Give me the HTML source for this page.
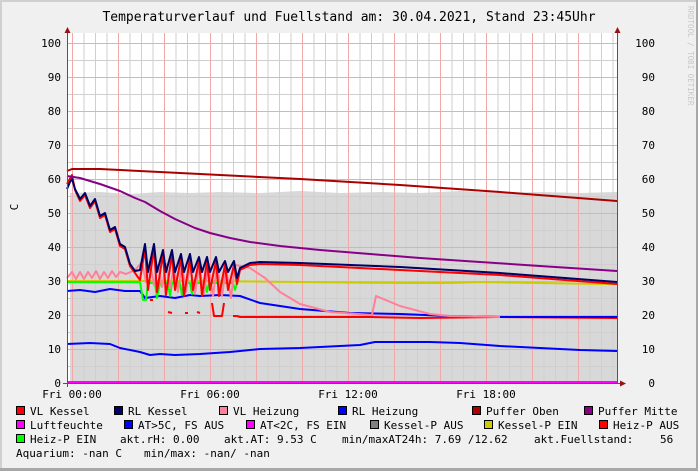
<!DOCTYPE html>
<html><head><meta charset="utf-8"><style>
html,body{margin:0;padding:0}
body{width:698px;height:471px;overflow:hidden;background:#f0f0f0}
svg{display:block}
text{font-family:"DejaVu Sans Mono","Liberation Mono",monospace;font-size:11px;fill:#000}
</style></head><body>
<svg width="698" height="471" viewBox="0 0 698 471" xmlns="http://www.w3.org/2000/svg">
<defs>
<pattern id="gv" x="72" y="0" width="11.5" height="471" patternUnits="userSpaceOnUse"><line x1="0.5" y1="0" x2="0.5" y2="471" stroke="#cfcfcf" stroke-width="1"/></pattern>
<pattern id="gh" x="0" y="383" width="698" height="17" patternUnits="userSpaceOnUse"><line x1="0" y1="0.5" x2="698" y2="0.5" stroke="#cfcfcf" stroke-width="1"/></pattern>
<pattern id="rv" x="72" y="0" width="46" height="471" patternUnits="userSpaceOnUse"><line x1="0.5" y1="0" x2="0.5" y2="471" stroke="#f0a8a8" stroke-width="1"/></pattern>
<pattern id="rh" x="0" y="383" width="698" height="34" patternUnits="userSpaceOnUse"><line x1="0" y1="0.5" x2="698" y2="0.5" stroke="#f0a8a8" stroke-width="1"/></pattern>
</defs>
<rect x="0" y="0" width="698" height="471" fill="#f0f0f0"/>
<rect x="0" y="0" width="698" height="2" fill="#d0d0d0"/>
<rect x="0" y="0" width="2" height="471" fill="#d0d0d0"/>
<rect x="696" y="0" width="2" height="471" fill="#a8a8a8"/>
<rect x="0" y="468" width="698" height="3" fill="#a8a8a8"/>
<text x="349" y="21" text-anchor="middle" style="font-size:13px">Temperaturverlauf und Fuellstand am: 30.04.2021, Stand 23:45Uhr</text>
<text transform="translate(688,6) rotate(90)" style="font-size:7.5px;fill:#c8c8c8">RRDTOOL / TOBI OETIKER</text>
<text transform="translate(18,207) rotate(-90)" text-anchor="middle">C</text>
<rect x="67" y="33" width="550" height="350" fill="#fff"/>
<path d="M70,383 L70,193 L100,192 L130,194 L160,192 L190,193 L220,192 L260,193 L300,191 L340,193 L380,192 L420,193 L460,191 L500,193 L540,192 L580,193 L617,192 L617,383 Z" fill="#d8d8d8"/>
<g>
<rect x="67" y="33" width="550" height="350" fill="url(#gv)"/>
<rect x="67" y="33" width="550" height="350" fill="url(#gh)"/>
<rect x="67" y="33" width="550" height="350" fill="url(#rv)"/>
<rect x="67" y="33" width="550" height="350" fill="url(#rh)"/>
</g>
<g fill="none" stroke-width="2" stroke-linejoin="round">
<path stroke="#0000ff" d="M67,344 L90,343 L110,344 L120,348 L140,352 L150,355 L160,354 L175,355 L200,354 L230,352 L260,349 L300,348 L340,346 L360,345 L375,342 L400,342 L430,342 L460,343 L500,346 L540,348 L580,350 L617,351"/>
<path stroke="#ff0000" d="M150,300 L153,300 M168,312 L172,313 M185,313 L188,313 M197,312 L200,313 M212,303 L214,316 L222,316 L224,303 M233,316 L237,316 L240,317 L300,317 L370,317 L420,318 L500,317 L617,318"/>
<path stroke="#0000ff" d="M67,291 L80,290 L95,292 L110,289 L125,291 L140,291 L145,298 L160,296 L175,298 L190,295 L200,296 L220,295 L240,296 L260,303 L300,309 L350,313 L400,314 L450,316 L500,317 L617,317"/>
<path stroke="#cccc00" d="M67,281 L200,281 L300,282 L400,283 L450,283 L480,282 L540,283 L600,284 L617,284"/>
<path stroke="#00ff00" d="M67,282 L140,282 L143,300 L146,300 L148,283 L155,283 L157,298 L160,283 L168,283 L170,296 L172,283 L180,283 L182,295 L184,283 L190,283 L192,294 L194,283 L205,283 L207,292 L209,283 L218,283 L220,290 L222,283 L233,283 L235,290 L237,283"/>
<path stroke="#ff8099" d="M67,278 L72,272 L76,279 L80,272 L84,279 L88,272 L92,278 L96,271 L100,279 L104,272 L108,278 L112,271 L116,277 L120,272 L126,274 L135,270 L142,262 L146,282 L150,262 L154,285 L158,265 L162,287 L166,264 L170,288 L174,266 L178,292 L182,264 L186,292 L190,266 L195,294 L199,266 L204,294 L208,265 L213,296 L217,266 L222,296 L226,268 L231,298 L235,265 L240,266 L250,268 L265,278 L280,292 L300,304 L330,312 L372,315 L376,296 L400,306 L430,314 L450,316 L500,317"/>
<path stroke="#ff0000" d="M67,184 L72,175 L75,190 L80,201 L85,195 L90,208 L95,201 L100,218 L105,215 L110,232 L115,229 L120,246 L125,249 L130,266 L135,273 L140,280 L145,248 L148,290 L154,248 L157,292 L163,254 L166,295 L172,254 L175,290 L181,258 L184,296 L190,258 L193,290 L199,261 L202,296 L207,261 L210,290 L216,261 L219,296 L225,265 L228,290 L234,265 L237,284 L240,270 L250,265 L260,264 L300,265 L400,270 L500,275 L617,284"/>
<path stroke="#000066" d="M67,189 L70,182 L72,179 L75,189 L80,199 L85,193 L90,206 L95,199 L100,216 L105,213 L110,230 L115,227 L120,244 L125,247 L130,264 L135,271 L140,270 L145,244 L148,272 L154,244 L157,272 L163,250 L166,272 L172,250 L175,272 L181,254 L184,272 L190,254 L193,272 L199,257 L202,272 L207,257 L210,272 L216,257 L219,272 L225,261 L228,272 L234,261 L237,278 L240,268 L250,263 L260,262 L300,263 L400,267 L500,273 L617,282"/>
<path stroke="#880088" d="M67,176 L80,178 L100,184 L120,191 L135,198 L145,202 L160,211 L175,219 L195,228 L210,233 L230,238 L250,242 L280,246 L320,250 L370,254 L420,258 L480,262 L540,266 L617,271"/>
<path stroke="#aa0000" d="M67,171 L72,169 L100,169 L200,174 L300,179 L400,185 L500,192 L617,201"/>
<path stroke="#ff00ff" d="M67,382 L617,382"/>
</g>
<line x1="67.5" y1="30" x2="67.5" y2="387" stroke="#555"/>
<line x1="617.5" y1="30" x2="617.5" y2="383" stroke="#555"/>
<line x1="63" y1="383.5" x2="622" y2="383.5" stroke="#555"/>
<polygon points="64.5,33 70.5,33 67.5,27" fill="#991111"/>
<polygon points="614.5,33 620.5,33 617.5,27" fill="#991111"/>
<polygon points="620,380.5 620,386.5 626,383.5" fill="#991111"/>
<g text-anchor="end">
<text x="61" y="47">100</text><text x="61" y="81">90</text><text x="61" y="115">80</text><text x="61" y="149">70</text><text x="61" y="183">60</text><text x="61" y="217">50</text><text x="61" y="251">40</text><text x="61" y="285">30</text><text x="61" y="319">20</text><text x="61" y="353">10</text><text x="61" y="387">0</text>
<text x="655" y="47">100</text><text x="655" y="81">90</text><text x="655" y="115">80</text><text x="655" y="149">70</text><text x="655" y="183">60</text><text x="655" y="217">50</text><text x="655" y="251">40</text><text x="655" y="285">30</text><text x="655" y="319">20</text><text x="655" y="353">10</text><text x="655" y="387">0</text>
</g>
<g text-anchor="middle">
<text x="72" y="398">Fri 00:00</text><text x="210" y="398">Fri 06:00</text><text x="348" y="398">Fri 12:00</text><text x="486" y="398">Fri 18:00</text>
</g>
<g stroke="#000" stroke-width="1">
<rect x="16.5" y="406.5" width="8" height="8" fill="#ff0000"/>
<rect x="114.5" y="406.5" width="8" height="8" fill="#000066"/>
<rect x="219.5" y="406.5" width="8" height="8" fill="#ff8099"/>
<rect x="338.5" y="406.5" width="8" height="8" fill="#0000ff"/>
<rect x="472.5" y="406.5" width="8" height="8" fill="#aa0000"/>
<rect x="584.5" y="406.5" width="8" height="8" fill="#880088"/>
<rect x="16.5" y="420.5" width="8" height="8" fill="#ff00ff"/>
<rect x="124.5" y="420.5" width="8" height="8" fill="#0000ff"/>
<rect x="246.5" y="420.5" width="8" height="8" fill="#ff00ff"/>
<rect x="370.5" y="420.5" width="8" height="8" fill="#808080"/>
<rect x="484.5" y="420.5" width="8" height="8" fill="#cccc00"/>
<rect x="599.5" y="420.5" width="8" height="8" fill="#ff0000"/>
<rect x="16.5" y="434.5" width="8" height="8" fill="#00ff00"/>
</g>
<g style="font-size:11.5px">
<text x="30" y="415">VL Kessel</text>
<text x="128" y="415">RL Kessel</text>
<text x="233" y="415">VL Heizung</text>
<text x="352" y="415">RL Heizung</text>
<text x="486" y="415">Puffer Oben</text>
<text x="598" y="415">Puffer Mitte</text>
<text x="30" y="429">Luftfeuchte</text>
<text x="138" y="429">AT&gt;5C, FS AUS</text>
<text x="260" y="429">AT&lt;2C, FS EIN</text>
<text x="384" y="429">Kessel-P AUS</text>
<text x="498" y="429">Kessel-P EIN</text>
<text x="613" y="429">Heiz-P AUS</text>
<text x="30" y="443">Heiz-P EIN</text>
<text x="120" y="443">akt.rH: 0.00</text>
<text x="224" y="443">akt.AT: 9.53 C</text>
<text x="342" y="443">min/maxAT24h: 7.69 /12.62</text>
<text x="534" y="443">akt.Fuellstand:</text>
<text x="660" y="443">56</text>
<text x="16" y="457">Aquarium: -nan C</text>
<text x="144" y="457">min/max: -nan/ -nan</text>
</g>
</svg>
</body></html>
